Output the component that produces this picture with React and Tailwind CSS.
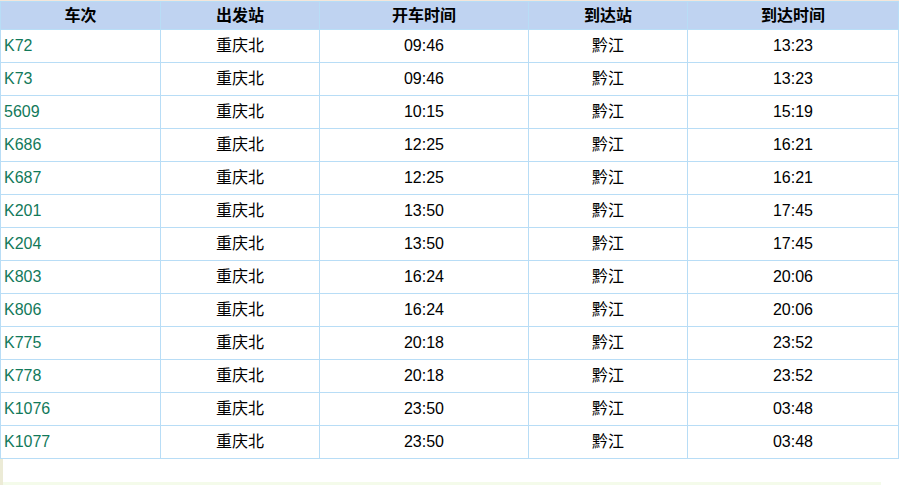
import React from 'react';

const ROWS = [
  ['K72', '重庆北', '09:46', '黔江', '13:23'],
  ['K73', '重庆北', '09:46', '黔江', '13:23'],
  ['5609', '重庆北', '10:15', '黔江', '15:19'],
  ['K686', '重庆北', '12:25', '黔江', '16:21'],
  ['K687', '重庆北', '12:25', '黔江', '16:21'],
  ['K201', '重庆北', '13:50', '黔江', '17:45'],
  ['K204', '重庆北', '13:50', '黔江', '17:45'],
  ['K803', '重庆北', '16:24', '黔江', '20:06'],
  ['K806', '重庆北', '16:24', '黔江', '20:06'],
  ['K775', '重庆北', '20:18', '黔江', '23:52'],
  ['K778', '重庆北', '20:18', '黔江', '23:52'],
  ['K1076', '重庆北', '23:50', '黔江', '03:48'],
  ['K1077', '重庆北', '23:50', '黔江', '03:48'],
];

const HEAD = ['车次', '出发站', '开车时间', '到达站', '到达时间'];
const WIDTHS = ['w-[160px]', 'w-[159px]', 'w-[209px]', 'w-[159px]', 'w-[211px]'];

export default function App() {
  return (
    <div
      className="w-[899px] h-[485px] bg-white overflow-hidden flex flex-col"
      style={{ fontFamily: '"Liberation Sans", "Noto Sans CJK SC", sans-serif' }}
    >
      <div className="h-[1px] bg-[#f3e6da] shrink-0" />
      <table className="border-collapse table-fixed w-[899px] text-[16px] text-black shrink-0">
        <thead>
          <tr className="h-[28px] bg-[#bfd3f1]">
            {HEAD.map((h, i) => (
              <th
                key={h}
                className={`${WIDTHS[i]} border border-[#b8ddf6] font-bold text-center p-0 leading-none`}
              >
                {h}
              </th>
            ))}
          </tr>
        </thead>
        <tbody>
          {ROWS.map((r) => (
            <tr key={r[0]} className="h-[33px]">
              <td className="border border-[#b8ddf6] text-left pl-[3px] text-[#12795a] p-0">{r[0]}</td>
              <td className="border border-[#b8ddf6] text-center p-0">{r[1]}</td>
              <td className="border border-[#b8ddf6] text-center p-0">{r[2]}</td>
              <td className="border border-[#b8ddf6] text-center p-0">{r[3]}</td>
              <td className="border border-[#b8ddf6] text-center p-0">{r[4]}</td>
            </tr>
          ))}
        </tbody>
      </table>
      <div className="flex-1 flex flex-col border-l-[3px] border-[#ecebd6]">
        <div className="flex-1" />
        <div className="h-[3px] w-[878px] bg-[#f4fbea]" />
      </div>
    </div>
  );
}
